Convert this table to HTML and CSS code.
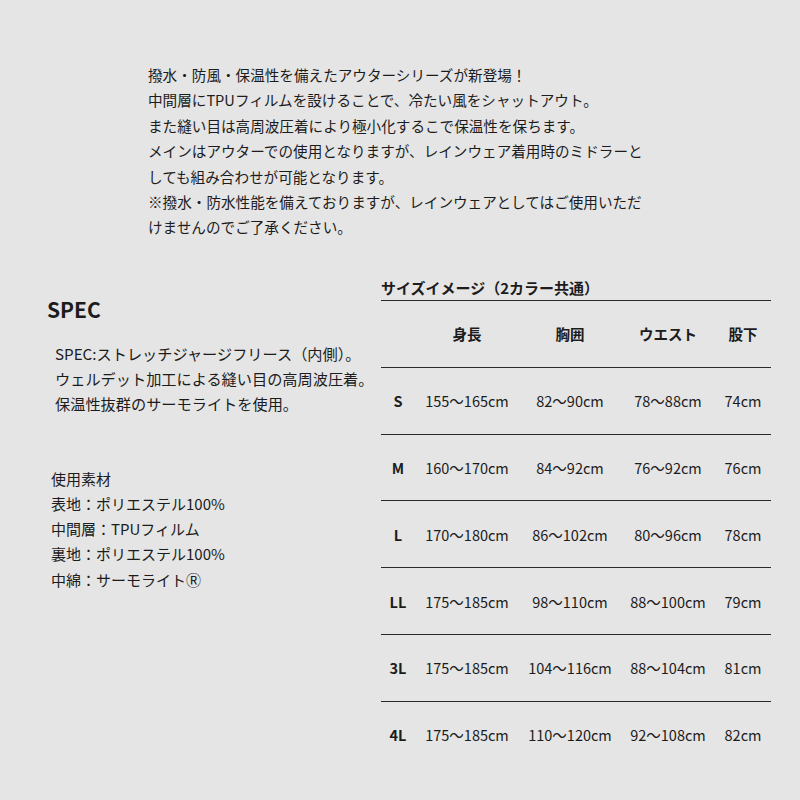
FILE: index.html
```html
<!DOCTYPE html>
<html lang="ja">
<head>
<meta charset="utf-8">
<title>SPEC</title>
<link rel="stylesheet" href="styles.css">
</head>
<body>
<div class="page">
  <div class="intro">
    <p>撥水・防風・保温性を備えたアウターシリーズが新登場！</p>
    <p>中間層にTPUフィルムを設けることで、冷たい風をシャットアウト。</p>
    <p>また縫い目は高周波圧着により極小化するこで保温性を保ちます。</p>
    <p>メインはアウターでの使用となりますが、レインウェア着用時のミドラーと</p>
    <p>しても組み合わせが可能となります。</p>
    <p>※撥水・防水性能を備えておりますが、レインウェアとしてはご使用いただ</p>
    <p>けませんのでご了承ください。</p>
  </div>
  <div class="main">
    <div class="left">
      <h2 class="spec-title">SPEC</h2>
      <div class="spec-list">
        <p>SPEC:ストレッチジャージフリース（内側）。</p>
        <p>ウェルデット加工による縫い目の高周波圧着。</p>
        <p>保温性抜群のサーモライトを使用。</p>
      </div>
      <div class="materials">
        <p>使用素材</p>
        <p>表地：ポリエステル100%</p>
        <p>中間層：TPUフィルム</p>
        <p>裏地：ポリエステル100%</p>
        <p>中綿：サーモライト&#x24C7;</p>
      </div>
    </div>
    <div class="right">
      <div class="size-title">サイズイメージ（2カラー共通）</div>
      <div class="size-table">
        <div class="row head">
          <span></span><span>身長</span><span>胸囲</span><span>ウエスト</span><span>股下</span>
        </div>
        <div class="row">
          <span class="sz">S</span><span>155〜165cm</span><span>82〜90cm</span><span>78〜88cm</span><span>74cm</span>
        </div>
        <div class="row">
          <span class="sz">M</span><span>160〜170cm</span><span>84〜92cm</span><span>76〜92cm</span><span>76cm</span>
        </div>
        <div class="row">
          <span class="sz">L</span><span>170〜180cm</span><span>86〜102cm</span><span>80〜96cm</span><span>78cm</span>
        </div>
        <div class="row">
          <span class="sz">LL</span><span>175〜185cm</span><span>98〜110cm</span><span>88〜100cm</span><span>79cm</span>
        </div>
        <div class="row">
          <span class="sz">3L</span><span>175〜185cm</span><span>104〜116cm</span><span>88〜104cm</span><span>81cm</span>
        </div>
        <div class="row last">
          <span class="sz">4L</span><span>175〜185cm</span><span>110〜120cm</span><span>92〜108cm</span><span>82cm</span>
        </div>
      </div>
    </div>
  </div>
</div>
</body>
</html>
```
FILE: styles.css
```css
html, body {
  margin: 0;
  padding: 0;
}
body {
  background: #e5e5e5;
  color: #1c1c1c;
  font-family: "Noto Sans CJK JP", "Noto Sans", sans-serif;
  width: 800px;
  height: 800px;
  overflow: hidden;
}
p {
  margin: 0;
}
.page {
  padding-top: 62px;
}
.intro {
  margin-left: 148px;
  font-size: 14.6px;
  line-height: 25.4px;
}
.main {
  display: flex;
  align-items: flex-start;
}
.left {
  width: 334px;
  padding-left: 47px;
  padding-top: 54px;
}
.spec-title {
  margin: 0;
  font-size: 21px;
  font-weight: 700;
  line-height: 30px;
}
.spec-list {
  margin-top: 17px;
  padding-left: 8px;
  font-size: 15.2px;
  line-height: 25px;
}
.materials {
  margin-top: 50px;
  padding-left: 4px;
  font-size: 15px;
  line-height: 25.2px;
}
.right {
  width: 390px;
  padding-top: 36px;
}
.size-title {
  font-size: 15px;
  font-weight: 700;
  line-height: 24px;
  border-bottom: 1px solid #2a2a2a;
}
.row {
  display: grid;
  grid-template-columns: 34px 104px 102px 94px 56px;
  align-items: center;
  height: 65.83px;
  border-bottom: 1px solid #2a2a2a;
  font-size: 14.5px;
}
.row.last {
  border-bottom: none;
}
.row span {
  text-align: center;
  white-space: nowrap;
}
.row.head span {
  font-weight: 700;
}
.row .sz {
  font-weight: 700;
}
```
